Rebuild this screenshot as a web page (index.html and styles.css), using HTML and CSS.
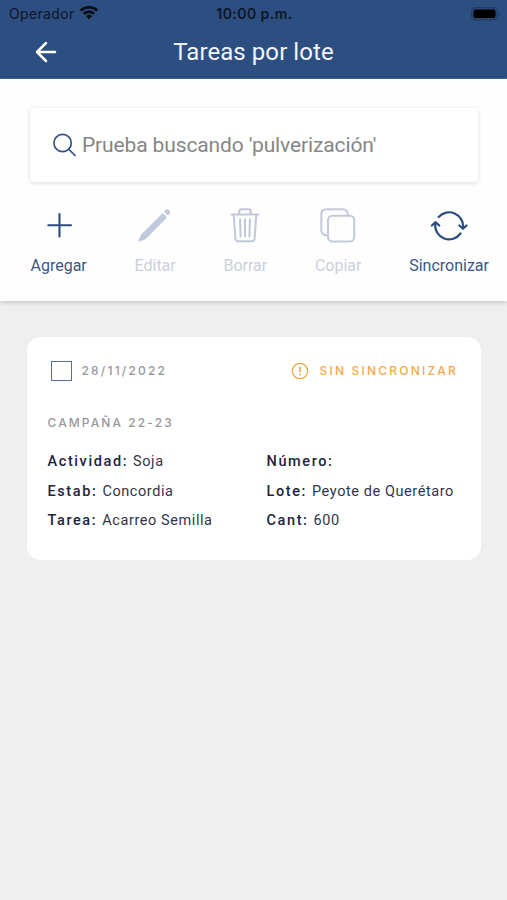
FILE: index.html
```html
<!DOCTYPE html>
<html lang="es">
<head>
<meta charset="utf-8">
<title>Tareas por lote</title>
<link rel="stylesheet" href="styles.css">
</head>
<body>
<header class="header">
  <div class="status">
    <div class="carrier">
      <span>Operador</span>
      <svg class="wifi" width="20" height="15" viewBox="0 0 20 15" fill="none" stroke="#060c16" stroke-width="2.7"><path d="M1.7 5.600a12 12 0 0 1 16.600 0M4.800 8.900a7.500 7.500 0 0 1 10.400 0"/><path d="M10 14.200l-2.900-3a4.200 4.200 0 0 1 5.800 0z" fill="#060c16" stroke="none"/></svg>
    </div>
    <span class="clock">10:00 p.m.</span>
    <svg class="battery" width="30" height="14" viewBox="0 0 30 14"><rect x=".7" y=".7" width="25.6" height="12.2" rx="4" fill="#2a4872" stroke="#203c66" stroke-width="1.2"/><rect x="2.5" y="2.5" width="22" height="8.6" rx="2" fill="#000"/><path d="M28 4.6q2.4 2.2 0 4.4z" fill="#203c66"/></svg>
  </div>
  <div class="titlebar">
    <svg class="back" width="22" height="22" viewBox="0 0 22 22" fill="none" stroke="#fff" stroke-width="2.5" stroke-linecap="round" stroke-linejoin="round"><path d="M20 11H2M11 2L2 11l9 9"/></svg>
    <h1 class="title">Tareas por lote</h1>
  </div>
</header>
<section class="panel">
  <div class="search">
    <svg width="24" height="24" viewBox="0 0 24 24" fill="none" stroke="#345489" stroke-width="1.7" stroke-linecap="round"><circle cx="9.600" cy="10" r="8.700"/><path d="M15.900 16.300l6.200 6.200"/></svg>
    <span class="query">Prueba buscando 'pulverización'</span>
  </div>
  <nav class="tools">
    <div class="tool">
      <svg width="38" height="38" viewBox="0 0 38 38" fill="none" stroke="#2c4c80" stroke-width="2.1" stroke-linecap="round"><path d="M19.500 8v22.500M8.300 19.200H31"/></svg>
      <span>Agregar</span>
    </div>
    <div class="tool off">
      <svg width="38" height="38" viewBox="0 0 38 38" fill="#c1c9dc"><path d="M26 7.800q.7-.6 1.400 0l3 3q.6.7 0 1.400L9.800 33 4 35.600q-1.500.3-1.600-1.300L5 28.800zM28.600 6.300q-.7-1.200.3-2.200 2.200-1.900 4.300 0 1.900 2.200 0 4.300-1 1-2.200.3z"/></svg>
      <span>Editar</span>
    </div>
    <div class="tool off">
      <svg width="38" height="38" viewBox="0 0 38 38" fill="none" stroke="#c0c8d8" stroke-width="2" stroke-linecap="round" stroke-linejoin="round"><path d="M5.500 8.500h27M7.700 8.500l1.700 24q.2 2.800 2.800 2.800h13.600q2.600 0 2.800-2.800l1.700-24M13.300 8V5.600q0-2.300 2.300-2.300h6.800q2.300 0 2.300 2.300V8M14 13.200l.6 17.400M19 13.200v17.400M24 13.200l-.6 17.400"/></svg>
      <span>Borrar</span>
    </div>
    <div class="tool off">
      <svg width="38" height="38" viewBox="0 0 38 38" fill="none" stroke="#c3cad7" stroke-width="2" stroke-linejoin="round"><rect x="9" y="9.700" width="26.300" height="25.800" rx="4.500"/><path d="M9 29.500H7.500Q2.300 28.500 2.300 24V8.500Q2.300 3.200 7.600 3.200h16Q28.500 3.200 29.200 9.500"/></svg>
      <span>Copiar</span>
    </div>
    <div class="tool">
      <svg width="38" height="38" viewBox="0 0 38 38" fill="none" stroke="#294b80" stroke-width="2.200" stroke-linecap="round" stroke-linejoin="round"><path d="M8.700 11A13.900 13.900 0 0 1 33 21.500M30.500 27.500A13.900 13.900 0 0 1 5.300 18M29.300 19.500l3.700 3.300L36.500 19.500M1.900 19.500l3.500-3.300L9.300 19.500"/></svg>
      <span>Sincronizar</span>
    </div>
  </nav>
</section>
<main>
  <article class="card">
    <div class="card-head">
      <span class="check"></span>
      <span class="date">28/11/2022</span>
      <svg class="alert" width="18" height="18" viewBox="0 0 18 18" fill="none" stroke="#f2a840" stroke-width="1.300"><circle cx="9" cy="9" r="7.700"/><path d="M9 4.800v5.300M9 11.700v1.700" stroke-width="1.700"/></svg>
      <span class="sync">SIN SINCRONIZAR</span>
    </div>
    <div class="campaign">CAMPAÑA 22-23</div>
    <div class="fields">
      <div><b>Actividad:</b><span>Soja</span></div>
      <div><b>Número:</b></div>
      <div><b>Estab:</b><span>Concordia</span></div>
      <div><b>Lote:</b><span>Peyote de Querétaro</span></div>
      <div><b>Tarea:</b><span>Acarreo Semilla</span></div>
      <div><b>Cant:</b><span>600</span></div>
    </div>
  </article>
</main>
</body>
</html>
```
FILE: styles.css
```css
* { box-sizing: border-box; }
body {
  margin: 0;
  min-height: 900px;
  background: #efefef;
  font-family: Roboto, sans-serif;
}
svg { display: block; flex: none; }
.header {
  height: 79px;
  background: #2c4e81;
  border-bottom: 1px solid #496896;
}
.status {
  display: grid;
  grid-template-columns: 1fr auto 1fr;
  align-items: center;
  height: 27px;
  padding: 0 6px 0 9px;
  font-family: Inter, sans-serif;
  color: #0c1728;
}
.carrier {
  display: flex;
  align-items: center;
  gap: 4px;
  font-size: 14px;
  letter-spacing: 0.35px;
}
.wifi { margin-top: -2px; }
.clock { margin-right: 1px; font-size: 14px; font-weight: 600; letter-spacing: 0.45px; }
.battery { justify-self: end; }
.titlebar {
  display: grid;
  grid-template-columns: 1fr auto 1fr;
  align-items: center;
  height: 50px;
}
.back { margin-left: 35px; }
.title {
  margin: 0;
  font-size: 24px;
  font-weight: 400;
  line-height: 28px;
  letter-spacing: 0.07px;
  color: #f1f4fc;
}
.panel {
  height: 222px;
  padding-top: 29px;
  background: #fefefe;
  box-shadow: 0 1px 5px rgba(0, 0, 0, 0.22);
}
.search {
  display: flex;
  align-items: center;
  gap: 5px;
  height: 74px;
  margin: 0 29px 0 30px;
  padding-left: 23px;
  border-radius: 4px;
  background: #fff;
  box-shadow: 0 1px 5px rgba(0, 0, 0, 0.14);
}
.query { font-size: 21px; letter-spacing: -0.13px; color: #868686; }
.tools {
  display: flex;
  justify-content: space-between;
  padding: 24px 18px 0 30.5px;
}
.tool {
  display: flex;
  flex-direction: column;
  align-items: center;
  gap: 12px;
  font-size: 16px;
  line-height: 19px;
  color: #3a5788;
}
.off { color: #cbd0da; }
.card {
  height: 223px;
  margin: 36px 26px 0 27px;
  padding: 23px 23px 0 20.5px;
  border-radius: 14px;
  background: #fff;
}
.card-head {
  display: flex;
  align-items: center;
  height: 22px;
  font: 500 12px/16px Inter, sans-serif;
}
.check {
  width: 21px;
  height: 20px;
  margin-left: 3px;
  border: 1.5px solid #546f9d;
}
.date { margin-left: 10px; letter-spacing: 2.2px; color: #96979c; }
.alert { margin-left: auto; }
.sync { margin-left: 11px; letter-spacing: 2.2px; color: #f3aa48; }
.campaign {
  margin-top: 33px;
  font: 500 12px/16px Inter, sans-serif;
  letter-spacing: 2.1px;
  color: #96979c;
}
.fields {
  display: grid;
  grid-template-columns: 219px 1fr;
  grid-auto-rows: 29.4px;
  align-items: center;
  margin-top: 16px;
  white-space: nowrap;
  font-size: 14.5px;
  color: #34354a;
}
.fields b { font-weight: 500; letter-spacing: 1.6px; color: #22233d; }
.fields span { margin-left: 5px; letter-spacing: 0.58px; }
```
